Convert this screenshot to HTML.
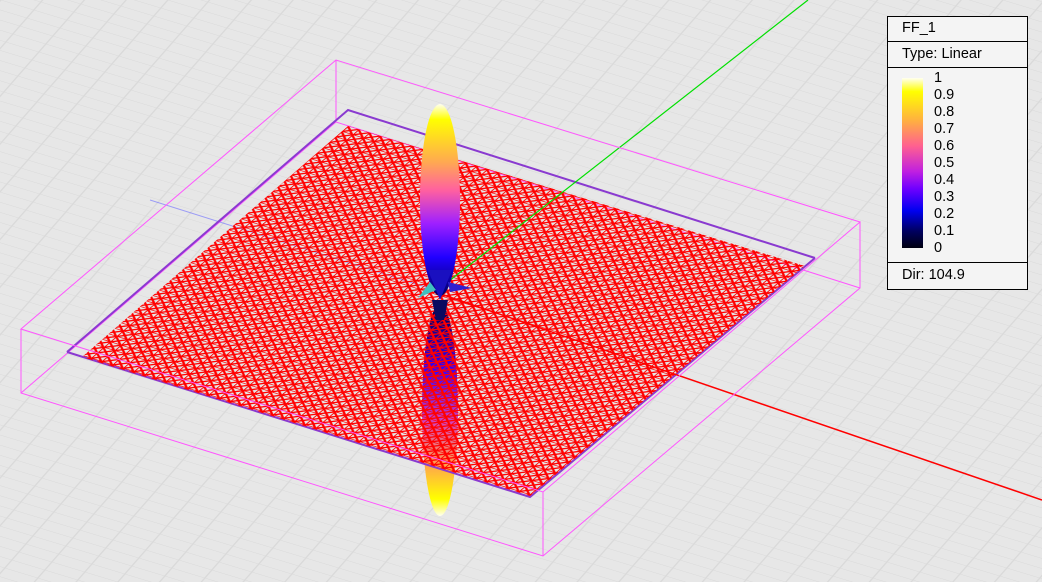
<!DOCTYPE html>
<html><head><meta charset="utf-8"><style>
html,body{margin:0;padding:0;background:#e6e6e6;width:1042px;height:582px;overflow:hidden;font-family:"Liberation Sans",sans-serif}
#leg{position:absolute;left:887px;top:16px;width:139px;height:272px;border:1px solid #000;background:#f4f4f4;font-size:14.5px;color:#000}
#leg .r{border-bottom:1px solid #000;padding-left:14px;box-sizing:border-box}
</style></head><body>
<svg width="1042" height="582" style="position:absolute;left:0;top:0">
<defs>
<pattern id="bg" patternUnits="userSpaceOnUse" width="1" height="1" patternTransform="matrix(33 10 7 -8 0 0)">
<rect width="1" height="1" fill="#e7e7e7"/>
<path d="M0 0H1M0 0V1" stroke="#d9d9d9" stroke-width="0.08"/>
</pattern>
<pattern id="mesh" patternUnits="userSpaceOnUse" width="1" height="1" patternTransform="matrix(6.38 -5.45 10.7 3.33 80 355)">
<path d="M0 0H1M0 0V1M0 0L1 1M0 1L1 0" stroke="#ff0000" stroke-width="0.2" fill="none"/>
</pattern>
<linearGradient id="up" x1="0" y1="0" x2="0" y2="1">
<stop offset="0" stop-color="#fffff0"/><stop offset="0.08" stop-color="#ffff00"/>
<stop offset="0.3" stop-color="#ffaa50"/><stop offset="0.45" stop-color="#ff60a0"/>
<stop offset="0.62" stop-color="#a020ff"/><stop offset="0.8" stop-color="#2000ff"/><stop offset="1" stop-color="#000060"/>
</linearGradient>
<linearGradient id="dn" x1="0" y1="0" x2="0" y2="1">
<stop offset="0" stop-color="#000040"/><stop offset="0.3" stop-color="#3000ff"/>
<stop offset="0.55" stop-color="#d040c0"/><stop offset="0.75" stop-color="#ffa050"/>
<stop offset="0.92" stop-color="#ffff00"/><stop offset="1" stop-color="#fffff0"/>
</linearGradient>
</defs>
<rect width="1042" height="582" fill="url(#bg)"/>
<g stroke="#ff55ff" stroke-width="1" fill="none">
<path d="M21 393L336 122L860 288M336 60V122"/>
</g>
<ellipse cx="440" cy="410" rx="18" ry="106" fill="url(#dn)"/>
<path d="M435 290L150 200" stroke="#6a6aff" stroke-width="1" opacity="0.6"/>
<path d="M67 352L348 110L815 258" stroke="#8a3ad0" stroke-width="2" fill="none"/>
<path d="M67 352L530 497L815 258" stroke="#8a3ad0" stroke-width="2" fill="none"/>
<polygon points="82,357 348,126 805,266 530,496" fill="url(#mesh)"/>
<path d="M435 292L808 0" stroke="#00e000" stroke-width="1.2"/>
<path d="M435 292L1042 500" stroke="#ff0000" stroke-width="1.5"/>
<ellipse cx="440" cy="200" rx="20" ry="96" fill="url(#up)"/>
<path d="M428 270L440 300L452 270Z" fill="#1a10c0"/>
<path d="M430 282L418 298L436 290Z" fill="#40c0c0"/>
<path d="M448 282L472 288L450 292Z" fill="#3020d0"/>
<path d="M432 300L448 300L444 320L436 320Z" fill="#0a0a60"/>
<g stroke="#ff55ff" stroke-width="1" fill="none">
<path d="M21 329L336 60L860 222L543 492L21 329Z"/>
<path d="M21 329V393L543 556L860 288V222M543 492V556"/>
</g>
</svg>
<div id="leg">
<div class="r" style="height:25px;line-height:23px">FF_1</div>
<div class="r" style="height:26px;line-height:25px">Type: Linear</div>
<div class="r" style="height:195px;position:relative;border-bottom:1px solid #000">
<div style="position:absolute;left:14px;top:10px;width:21px;height:170px;background:linear-gradient(#fffff0 0%,#ffff00 8%,#ffb040 25%,#ff6090 40%,#c020e0 55%,#7000ff 65%,#0000f0 78%,#000060 90%,#000010 100%)"></div>
<div style="position:absolute;left:46px;top:2px;line-height:17px">1<br>0.9<br>0.8<br>0.7<br>0.6<br>0.5<br>0.4<br>0.3<br>0.2<br>0.1<br>0</div>
</div>
<div style="padding-left:14px;line-height:24px">Dir: 104.9</div>
</div>
</body></html>
